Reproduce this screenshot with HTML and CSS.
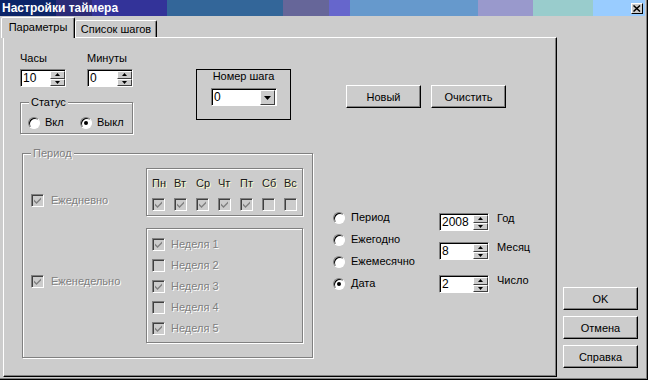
FILE: index.html
```html
<!DOCTYPE html>
<html lang="ru">
<head>
    <meta charset="UTF-8">
    <title>Настройки таймера</title>
    <link rel="stylesheet" href="styles.css">
</head>
<body>
    <div class="window">
        <div class="titlebar">
            <span class="title">Настройки таймера</span>
            <span class="close">
                <svg width="8" height="7" viewBox="0 0 8 7"><path d="M0.5 0.5L7 6.5M7 0.5L0.5 6.5" stroke="#000" stroke-width="1.5"/></svg>
            </span>
        </div>

        <div class="client">
            <div class="tabs-wrap">
                <div class="tab-strip">
                    <div class="tab active">Параметры</div>
                    <div class="tab other">Список шагов</div>
                </div>

                <div class="panel">
                    <div class="top">
                        <div class="col-time">
                            <div class="fields">
                                <div class="field">
                                    <div class="label">Часы</div>
                                    <div class="spin w46">
                                        <span class="spin-value">10</span>
                                        <span class="spin-btns">
                                            <span class="spin-btn"><svg width="5" height="3" viewBox="0 0 5 3"><path d="M2.5 0L5 3H0z"/></svg></span>
                                            <span class="spin-btn"><svg width="5" height="3" viewBox="0 0 5 3"><path d="M0 0H5L2.5 3z"/></svg></span>
                                        </span>
                                    </div>
                                </div>
                                <div class="field">
                                    <div class="label">Минуты</div>
                                    <div class="spin w46">
                                        <span class="spin-value">0</span>
                                        <span class="spin-btns">
                                            <span class="spin-btn"><svg width="5" height="3" viewBox="0 0 5 3"><path d="M2.5 0L5 3H0z"/></svg></span>
                                            <span class="spin-btn"><svg width="5" height="3" viewBox="0 0 5 3"><path d="M0 0H5L2.5 3z"/></svg></span>
                                        </span>
                                    </div>
                                </div>
                            </div>

                            <div class="group status">
                                <span class="group-title">Статус</span>
                                <div class="radio-item short"><span class="radio"></span>Вкл</div>
                                <div class="radio-item short"><span class="radio on"></span>Выкл</div>
                            </div>
                        </div>

                        <div class="step-box">
                            <div class="step-label">Номер шага</div>
                            <div class="combo">
                                <span class="combo-value">0</span>
                                <span class="combo-btn"><svg width="7" height="4" viewBox="0 0 7 4"><path d="M0 0H7L3.5 4z"/></svg></span>
                            </div>
                        </div>

                        <div class="actions">
                            <button class="btn">Новый</button>
                            <button class="btn">Очистить</button>
                        </div>
                    </div>

                    <div class="bottom">
                        <div class="group period">
                            <span class="group-title disabled">Период</span>
                            <div class="period-row">
                                <div class="check-item disabled daily">
                                    <span class="check"><svg width="7" height="7" viewBox="0 0 7 7"><path d="M0 2.5L2.5 5L7 0.5V2.5L2.5 7L0 4.5z"/></svg></span>Ежедневно
                                </div>
                                <div class="etched days">
                                    <span class="day">Пн</span>
                                    <span class="day">Вт</span>
                                    <span class="day">Ср</span>
                                    <span class="day">Чт</span>
                                    <span class="day">Пт</span>
                                    <span class="day">Сб</span>
                                    <span class="day">Вс</span>
                                    <span class="check"><svg width="7" height="7" viewBox="0 0 7 7"><path d="M0 2.5L2.5 5L7 0.5V2.5L2.5 7L0 4.5z"/></svg></span>
                                    <span class="check"><svg width="7" height="7" viewBox="0 0 7 7"><path d="M0 2.5L2.5 5L7 0.5V2.5L2.5 7L0 4.5z"/></svg></span>
                                    <span class="check"><svg width="7" height="7" viewBox="0 0 7 7"><path d="M0 2.5L2.5 5L7 0.5V2.5L2.5 7L0 4.5z"/></svg></span>
                                    <span class="check"><svg width="7" height="7" viewBox="0 0 7 7"><path d="M0 2.5L2.5 5L7 0.5V2.5L2.5 7L0 4.5z"/></svg></span>
                                    <span class="check"><svg width="7" height="7" viewBox="0 0 7 7"><path d="M0 2.5L2.5 5L7 0.5V2.5L2.5 7L0 4.5z"/></svg></span>
                                    <span class="check"></span>
                                    <span class="check"></span>
                                </div>
                            </div>

                            <div class="period-row weekly-row">
                                <div class="check-item disabled weekly">
                                    <span class="check"><svg width="7" height="7" viewBox="0 0 7 7"><path d="M0 2.5L2.5 5L7 0.5V2.5L2.5 7L0 4.5z"/></svg></span>Еженедельно
                                </div>
                                <div class="etched weeks">
                                    <div class="check-item disabled"><span class="check"><svg width="7" height="7" viewBox="0 0 7 7"><path d="M0 2.5L2.5 5L7 0.5V2.5L2.5 7L0 4.5z"/></svg></span>Неделя 1</div>
                                    <div class="check-item disabled"><span class="check"></span>Неделя 2</div>
                                    <div class="check-item disabled"><span class="check"><svg width="7" height="7" viewBox="0 0 7 7"><path d="M0 2.5L2.5 5L7 0.5V2.5L2.5 7L0 4.5z"/></svg></span>Неделя 3</div>
                                    <div class="check-item disabled"><span class="check"></span>Неделя 4</div>
                                    <div class="check-item disabled"><span class="check"><svg width="7" height="7" viewBox="0 0 7 7"><path d="M0 2.5L2.5 5L7 0.5V2.5L2.5 7L0 4.5z"/></svg></span>Неделя 5</div>
                                </div>
                            </div>
                        </div>

                        <div class="mode">
                            <div class="radios">
                                <div class="radio-item"><span class="radio"></span>Период</div>
                                <div class="radio-item"><span class="radio"></span>Ежегодно</div>
                                <div class="radio-item"><span class="radio"></span>Ежемесячно</div>
                                <div class="radio-item"><span class="radio on"></span>Дата</div>
                            </div>

                            <div class="dates">
                                <div class="date-row">
                                    <div class="spin w50">
                                        <span class="spin-value">2008</span>
                                        <span class="spin-btns">
                                            <span class="spin-btn"><svg width="5" height="3" viewBox="0 0 5 3"><path d="M2.5 0L5 3H0z"/></svg></span>
                                            <span class="spin-btn"><svg width="5" height="3" viewBox="0 0 5 3"><path d="M0 0H5L2.5 3z"/></svg></span>
                                        </span>
                                    </div>
                                    <span class="date-label">Год</span>
                                </div>
                                <div class="date-row">
                                    <div class="spin w50">
                                        <span class="spin-value">8</span>
                                        <span class="spin-btns">
                                            <span class="spin-btn"><svg width="5" height="3" viewBox="0 0 5 3"><path d="M2.5 0L5 3H0z"/></svg></span>
                                            <span class="spin-btn"><svg width="5" height="3" viewBox="0 0 5 3"><path d="M0 0H5L2.5 3z"/></svg></span>
                                        </span>
                                    </div>
                                    <span class="date-label">Месяц</span>
                                </div>
                                <div class="date-row">
                                    <div class="spin w50">
                                        <span class="spin-value">2</span>
                                        <span class="spin-btns">
                                            <span class="spin-btn"><svg width="5" height="3" viewBox="0 0 5 3"><path d="M2.5 0L5 3H0z"/></svg></span>
                                            <span class="spin-btn"><svg width="5" height="3" viewBox="0 0 5 3"><path d="M0 0H5L2.5 3z"/></svg></span>
                                        </span>
                                    </div>
                                    <span class="date-label">Число</span>
                                </div>
                            </div>
                        </div>
                    </div>
                </div>
            </div>

            <div class="side">
                <button class="btn">OK</button>
                <button class="btn">Отмена</button>
                <button class="btn">Справка</button>
            </div>
        </div>
    </div>
</body>
</html>
```

FILE: styles.css
```css
* {
    margin: 0;
    padding: 0;
    box-sizing: border-box;
}

body {
    font-family: 'Liberation Sans', Arial, sans-serif;
    font-size: 11px;
    color: #000;
    background-color: #cccccc;
}

.window {
    width: 648px;
    height: 380px;
    background-color: #cccccc;
    box-shadow: inset -1px -1px #000, inset -2px -2px #808080;
}

/* title bar */
.titlebar {
    height: 16px;
    margin-right: 3px;
    padding: 0 2px;
    display: flex;
    align-items: center;
    justify-content: space-between;
    color: #fff;
    font-weight: bold;
    font-size: 12px;
    background: linear-gradient(to right,
        #0c2468 0 56px,
        #2c2b76 56px 92px,
        #333399 92px 167px,
        #336699 167px 283px,
        #666699 283px 329px,
        #6666cc 329px 350px,
        #6699cc 350px 478px,
        #9999cc 478px 533px,
        #99cccc 533px 593px,
        #99ccff 593px);
}

.close {
    width: 12px;
    height: 11px;
    display: flex;
    align-items: center;
    justify-content: center;
    background-color: #cccccc;
    border: 1px solid;
    border-color: #fff #000 #000 #fff;
}

.client {
    display: flex;
    height: 364px;
}

/* tabs */
.tabs-wrap {
    width: 557px;
    padding: 1px 0 0 1px;
}

.tab-strip {
    display: flex;
    align-items: flex-end;
    height: 20px;
    position: relative;
    z-index: 1;
}

.tab {
    height: 17px;
    border: 1px solid;
    border-bottom: none;
    border-color: #fff #000 transparent #fff;
    border-radius: 2px 2px 0 0;
    box-shadow: inset -1px 0 #808080;
    background-color: #cccccc;
    text-align: center;
    line-height: 16px;
}

.tab.active {
    width: 74px;
    height: 21px;
    margin-bottom: -1px;
    line-height: 18px;
}

.tab.other {
    width: 82px;
}

.panel {
    margin-left: 2px;
    width: 554px;
    height: 340px;
    border: 1px solid;
    border-color: #fff #000 #000 #fff;
    box-shadow: inset -1px -1px #808080;
    padding: 14px 0 0 16px;
}

/* top part */
.top {
    display: flex;
    align-items: flex-start;
}

.col-time {
    width: 113px;
}

.fields {
    display: flex;
    gap: 21px;
}

.label {
    line-height: 13px;
    margin-bottom: 4px;
}

.spin {
    display: flex;
    height: 18px;
    background-color: #fff;
    border: 1px solid;
    border-color: #808080 #fff #fff #808080;
    box-shadow: inset 1px 1px #000;
    padding: 1px 0 0 1px;
}

.w46 { width: 46px; }
.w50 { width: 50px; }

.spin-value {
    flex: 1;
    padding-left: 1px;
    font-size: 12px;
    line-height: 15px;
}

.spin-btns {
    width: 15px;
    display: flex;
    flex-direction: column;
}

.spin-btn {
    flex: 1;
    display: flex;
    align-items: center;
    justify-content: center;
    background-color: #cccccc;
    border: 1px solid;
    border-color: #fff #404040 #404040 #fff;
}

.spin-btn svg,
.combo-btn svg {
    fill: #000;
}

/* group boxes */
.group {
    position: relative;
    border: 1px solid #808080;
    box-shadow: inset 1px 1px #fff, 1px 1px #fff;
}

.group-title {
    position: absolute;
    top: -7px;
    left: 8px;
    padding: 0 2px;
    line-height: 13px;
    background-color: #cccccc;
}

.status {
    display: flex;
    height: 32px;
    margin-top: 15px;
    padding: 9px 0 0 7px;
}

.radio-item {
    display: flex;
    align-items: center;
    gap: 6px;
    line-height: 13px;
}

.radio-item.short {
    width: 52px;
    gap: 5px;
}

.radio {
    width: 12px;
    height: 12px;
    flex-shrink: 0;
    display: flex;
    align-items: center;
    justify-content: center;
    border-radius: 50%;
    background-color: #fff;
    border: 1px solid;
    border-color: #808080 #fff #fff #808080;
    box-shadow: inset 1px 1px #000;
}

.radio.on::after {
    content: '';
    width: 4px;
    height: 4px;
    border-radius: 50%;
    background-color: #000;
}

.step-box {
    width: 95px;
    height: 51px;
    margin: 17px 0 0 63px;
    border: 1px solid #000;
}

.step-label {
    text-align: center;
    line-height: 13px;
}

.combo {
    display: flex;
    width: 66px;
    height: 18px;
    margin: 5px 0 0 14px;
    background-color: #fff;
    border: 1px solid;
    border-color: #808080 #fff #fff #808080;
    box-shadow: inset 1px 1px #000;
    padding: 1px 1px 0 1px;
}

.combo-value {
    flex: 1;
    padding-left: 1px;
    font-size: 12px;
    line-height: 15px;
}

.combo-btn {
    width: 15px;
    height: 15px;
    display: flex;
    align-items: center;
    justify-content: center;
    background-color: #cccccc;
    border: 1px solid;
    border-color: #fff #404040 #404040 #fff;
}

.actions {
    display: flex;
    gap: 10px;
    margin: 33px 0 0 55px;
}

.btn {
    width: 75px;
    height: 23px;
    font: inherit;
    color: #000;
    background-color: #cccccc;
    border: 1px solid;
    border-color: #fff #000 #000 #fff;
    box-shadow: inset -1px -1px #808080;
}

/* bottom part */
.bottom {
    display: flex;
    align-items: flex-start;
    margin-top: 19px;
}

.period {
    width: 291px;
    height: 205px;
    margin-left: 2px;
}

.disabled {
    color: #808080;
    text-shadow: 1px 1px #fff;
}

.period-row {
    display: flex;
    align-items: flex-start;
    padding-left: 8px;
    margin-top: 14px;
}

.period-row.weekly-row {
    margin-top: 12px;
}

.check-item {
    display: flex;
    align-items: center;
    gap: 6px;
    line-height: 13px;
}

.daily,
.weekly {
    width: 115px;
    gap: 7px;
}

.daily { margin-top: 26px; }
.weekly { margin-top: 47px; }

.check {
    width: 13px;
    height: 13px;
    flex-shrink: 0;
    display: flex;
    align-items: center;
    justify-content: center;
    background-color: #cccccc;
    border: 1px solid;
    border-color: #808080 #fff #fff #808080;
    box-shadow: inset 1px 1px #404040;
}

.check svg {
    fill: #808080;
}

.etched {
    border: 1px solid #808080;
    box-shadow: inset 1px 1px #fff, 1px 1px #fff;
}

.days {
    width: 157px;
    height: 48px;
    display: grid;
    grid-template-columns: repeat(7, 22px);
    row-gap: 3px;
    padding: 8px 0 0 5px;
}

.day {
    line-height: 13px;
    color: #1a1a1a;
    text-shadow: 1px 1px #ffffc8;
}

.weeks {
    width: 157px;
    height: 115px;
    display: flex;
    flex-direction: column;
    gap: 8px;
    padding: 9px 0 0 5px;
}

.mode {
    display: flex;
    margin-left: 20px;
}

.radios {
    width: 106px;
    margin-top: 58px;
    display: flex;
    flex-direction: column;
    gap: 9px;
}

.dates {
    margin-top: 60px;
}

.date-row {
    display: flex;
    align-items: flex-start;
    gap: 8px;
}

.date-row + .date-row {
    margin-top: 11px;
}

.date-row:last-child {
    margin-top: 15px;
}

.date-label {
    line-height: 13px;
    margin-top: -1px;
}

/* dialog buttons */
.side {
    flex: 1;
    display: flex;
    flex-direction: column;
    justify-content: flex-end;
    gap: 6px;
    padding: 0 0 12px 6px;
}
```
